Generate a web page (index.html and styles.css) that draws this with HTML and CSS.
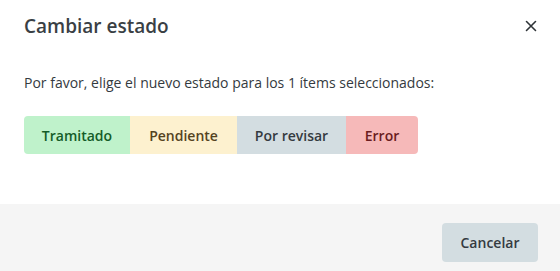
FILE: index.html
```html
<!DOCTYPE html>
<html lang="es">
<head>
    <meta charset="UTF-8">
    <title>Cambiar estado</title>
    <link rel="stylesheet" href="styles.css">
</head>
<body>
    <div class="modal">
        <div class="modal-header">
            <h2 class="modal-title">Cambiar estado</h2>
            <button class="close-btn" aria-label="Cerrar">
                <svg width="12" height="12" viewBox="0 0 12 12">
                    <path d="M1.5 1.5 L10.5 10.5 M10.5 1.5 L1.5 10.5" stroke="#2f3438" stroke-width="1.6" stroke-linecap="round"/>
                </svg>
            </button>
        </div>
        <div class="modal-body">
            <p class="intro">Por favor, elige el nuevo estado para los 1 ítems seleccionados:</p>
            <div class="states">
                <button class="state state-done">Tramitado</button>
                <button class="state state-pending">Pendiente</button>
                <button class="state state-review">Por revisar</button>
                <button class="state state-error">Error</button>
            </div>
        </div>
        <div class="modal-footer">
            <button class="btn-cancel">Cancelar</button>
        </div>
    </div>
</body>
</html>
```

FILE: styles.css
```css
body {
    margin: 0;
    font-family: "Open Sans", "Noto Sans", sans-serif;
    color: #343a40;
    background: #fff;
}

.modal {
    width: 560px;
    height: 271px;
    display: flex;
    flex-direction: column;
    overflow: hidden;
}

.modal-header {
    display: flex;
    align-items: center;
    justify-content: space-between;
    padding: 12px 24px 0 24px;
    height: 28px;
}

.modal-title {
    margin: 0;
    font-size: 19px;
    font-weight: 600;
    color: #3a3f44;
}

.close-btn {
    border: none;
    background: none;
    padding: 0;
    margin-right: -1px;
    width: 12px;
    height: 12px;
    display: flex;
    cursor: pointer;
}

.modal-body {
    padding: 0 24px;
    flex: 1;
}

.intro {
    margin: 33px 0 0 0;
    font-size: 14px;
    line-height: 20px;
    color: #343a40;
}

.states {
    display: flex;
    margin-top: 23px;
}

.state {
    border: none;
    height: 38px;
    padding: 0;
    white-space: nowrap;
    font-family: inherit;
    font-size: 14px;
    font-weight: 600;
    cursor: pointer;
}

.state:first-child {
    border-radius: 4px 0 0 4px;
}

.state:last-child {
    border-radius: 0 4px 4px 0;
}

.state-done {
    background: #bff2cb;
    color: #145c28;
    width: 106px;
}

.state-pending {
    background: #fdf1cf;
    color: #54431f;
    width: 107px;
}

.state-review {
    background: #d3dde1;
    color: #343a40;
    width: 109px;
}

.state-error {
    background: #f6b9b9;
    color: #6a1c20;
    width: 72px;
}

.modal-footer {
    background: #f5f5f5;
    height: 67px;
    display: flex;
    justify-content: flex-end;
    align-items: flex-start;
    padding: 19px 22px 0 0;
    box-sizing: border-box;
}

.btn-cancel {
    border: none;
    border-radius: 4px;
    background: #d3dde1;
    color: #343a40;
    font-family: inherit;
    font-size: 14px;
    font-weight: 600;
    width: 96px;
    height: 39px;
    cursor: pointer;
}
```
